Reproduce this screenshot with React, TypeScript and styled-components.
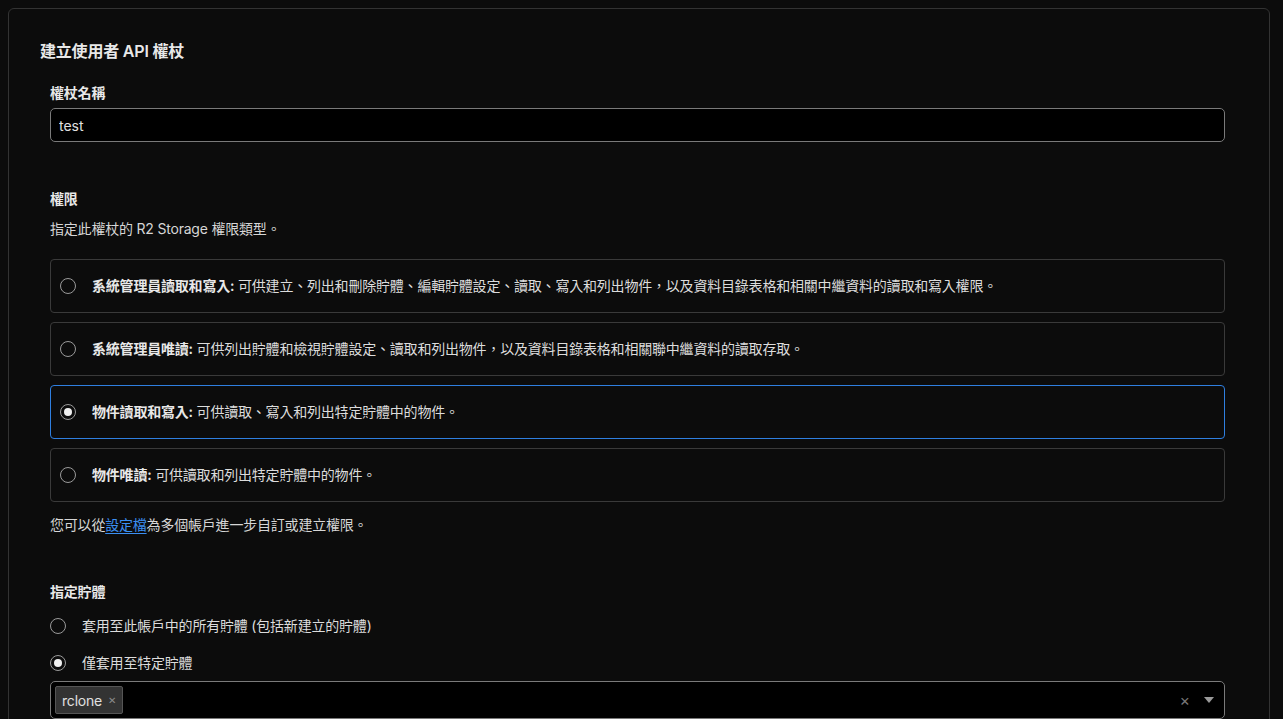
import { useState } from "react";
import { createGlobalStyle, styled } from "styled-components";

const GlobalStyle = createGlobalStyle`
  html, body {
    margin: 0;
    background: #0c0c0c;
    color: #dcdcdc;
    font-family: Inter, "Noto Sans CJK TC", sans-serif;
    font-size: 14px;
    letter-spacing: -0.2px;
  }
  * { box-sizing: border-box; }
`;

const Panel = styled.div`
  margin: 8px 13px 0 8px;
  border: 1px solid #333;
  border-radius: 6px;
  padding: 30px 44px 0 31px;
  min-height: 720px;
`;

const Title = styled.h2`
  margin: 0 0 20px;
  font-size: 16px;
  line-height: 24px;
  font-weight: 600;
  color: #e8e8e8;
`;

const Form = styled.div`
  padding-left: 10px;
  display: flex;
  flex-direction: column;
`;

const Section = styled.div<{ $gap?: number }>`
  display: flex;
  flex-direction: column;
  margin-bottom: ${(p) => p.$gap ?? 0}px;
`;

const Label = styled.div`
  font-size: 14px;
  line-height: 20px;
  font-weight: 600;
  color: #e8e8e8;
`;

const Hint = styled.div<{ $top: number }>`
  margin-top: ${(p) => p.$top}px;
  line-height: 20px;
  color: #d6d6d6;
`;

const TextInput = styled.input`
  margin-top: 5px;
  height: 34px;
  background: #000;
  border: 1px solid #7a7a7a;
  border-radius: 5px;
  padding: 0 8px;
  color: #e0e0e0;
  font: inherit;
  font-size: 14px;
  outline: none;
`;

const Cards = styled.div`
  margin-top: 20px;
  display: flex;
  flex-direction: column;
  gap: 9px;
`;

const Card = styled.label<{ $active: boolean }>`
  height: 54px;
  display: flex;
  align-items: center;
  gap: 16px;
  padding-left: 9px;
  border: 1px solid ${(p) => (p.$active ? "#2f7fe0" : "#3a3a3a")};
  border-radius: 4px;
  cursor: pointer;
  line-height: 20px;
`;

const Radio = styled.span<{ $on: boolean }>`
  flex: none;
  width: 16px;
  height: 16px;
  border-radius: 50%;
  border: 1px solid #9a9a9a;
  display: flex;
  align-items: center;
  justify-content: center;
  &::after {
    content: "";
    width: 8px;
    height: 8px;
    border-radius: 50%;
    background: #f0f0f0;
    display: ${(p) => (p.$on ? "block" : "none")};
  }
`;

const Strong = styled.b`
  font-weight: 600;
  color: #e8e8e8;
`;

const Link = styled.a`
  color: #3b8ff2;
  text-decoration: underline;
  text-underline-offset: 3px;
`;

const Choice = styled.label<{ $top: number }>`
  margin-top: ${(p) => p.$top}px;
  display: flex;
  align-items: center;
  gap: 16px;
  line-height: 20px;
  cursor: pointer;
`;

const Select = styled.div`
  margin-top: 8px;
  height: 38px;
  background: #000;
  border: 1px solid #7a7a7a;
  border-radius: 5px;
  display: flex;
  align-items: center;
  padding: 0 8px 0 4px;
`;

const Tag = styled.span`
  height: 28px;
  display: flex;
  align-items: center;
  gap: 6px;
  padding: 0 6px 0 6px;
  background: #333;
  border: 1px solid #555;
  border-radius: 2px;
  color: #e0e0e0;
  font-size: 14px;
`;

const TagX = styled.span`
  color: #8a8a8a;
  font-size: 10px;
`;

const Spacer = styled.div`
  flex: 1;
`;

const ClearX = styled.span`
  color: #777;
  font-size: 16px;
  margin-right: 14px;
`;

const Caret = styled.span`
  width: 0;
  height: 0;
  border-left: 5px solid transparent;
  border-right: 5px solid transparent;
  border-top: 6px solid #9a9a9a;
  margin-right: 2px;
`;

const options = [
  {
    title: "系統管理員讀取和寫入:",
    text: " 可供建立、列出和刪除貯體、編輯貯體設定、讀取、寫入和列出物件，以及資料目錄表格和相關中繼資料的讀取和寫入權限。",
  },
  {
    title: "系統管理員唯讀:",
    text: " 可供列出貯體和檢視貯體設定、讀取和列出物件，以及資料目錄表格和相關聯中繼資料的讀取存取。",
  },
  { title: "物件讀取和寫入:", text: " 可供讀取、寫入和列出特定貯體中的物件。" },
  { title: "物件唯讀:", text: " 可供讀取和列出特定貯體中的物件。" },
];

export default function App() {
  const [perm, setPerm] = useState(2);
  const [scope, setScope] = useState(1);

  return (
    <>
      <GlobalStyle />
      <Panel>
        <Title>建立使用者 API 權杖</Title>
        <Form>
          <Section $gap={47}>
            <Label>權杖名稱</Label>
            <TextInput defaultValue="test" />
          </Section>

          <Section $gap={47}>
            <Label>權限</Label>
            <Hint $top={10}>指定此權杖的 R2 Storage 權限類型。</Hint>
            <Cards>
              {options.map((o, i) => (
                <Card key={o.title} $active={perm === i} onClick={() => setPerm(i)}>
                  <Radio $on={perm === i} />
                  <span>
                    <Strong>{o.title}</Strong>
                    {o.text}
                  </span>
                </Card>
              ))}
            </Cards>
            <Hint $top={13}>
              您可以從<Link>設定檔</Link>為多個帳戶進一步自訂或建立權限。
            </Hint>
          </Section>

          <Section>
            <Label>指定貯體</Label>
            <Choice $top={14} onClick={() => setScope(0)}>
              <Radio $on={scope === 0} />
              套用至此帳戶中的所有貯體 (包括新建立的貯體)
            </Choice>
            <Choice $top={17} onClick={() => setScope(1)}>
              <Radio $on={scope === 1} />
              僅套用至特定貯體
            </Choice>
            <Select>
              <Tag>
                rclone <TagX>✕</TagX>
              </Tag>
              <Spacer />
              <ClearX>×</ClearX>
              <Caret />
            </Select>
          </Section>
        </Form>
      </Panel>
    </>
  );
}
